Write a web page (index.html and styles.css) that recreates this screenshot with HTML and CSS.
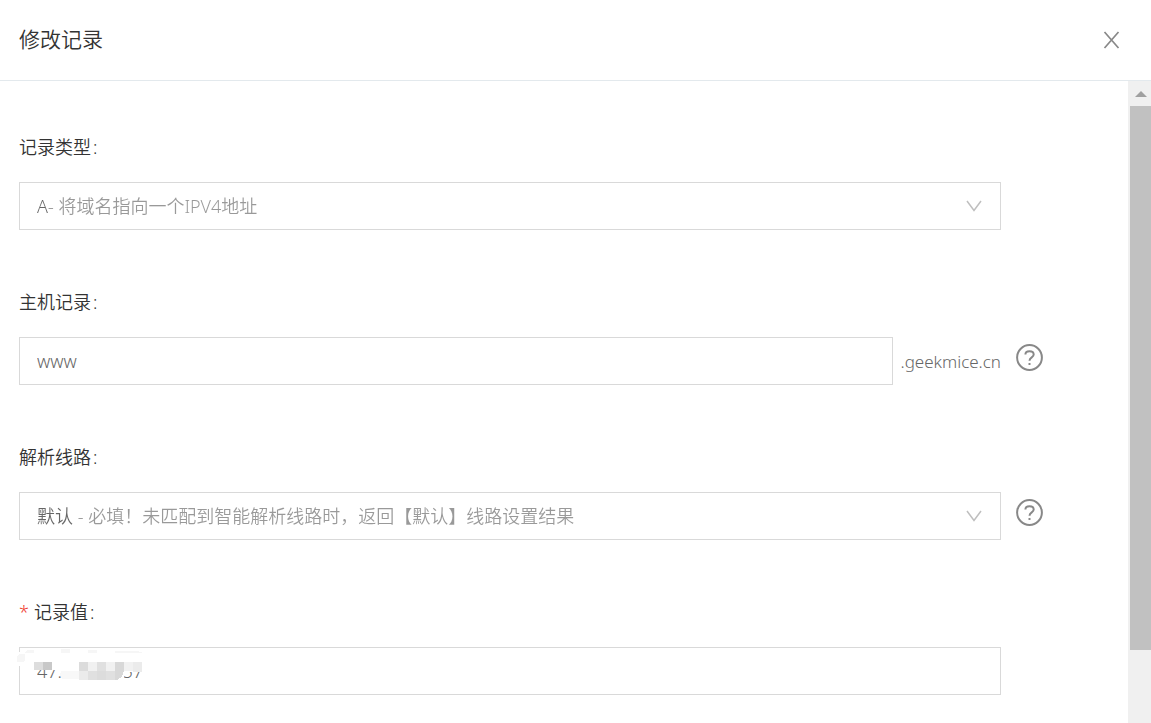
FILE: index.html
```html
<!DOCTYPE html>
<html lang="zh-CN">
<head>
    <meta charset="UTF-8">
    <meta name="viewport" content="width=device-width, initial-scale=1.0">
    <title>修改记录</title>
    <link rel="stylesheet" href="styles.css">
</head>
<body>
    <div class="drawer">
        <header class="drawer-header">
            <h1>修改记录</h1>
            <button type="button" class="close" aria-label="关闭">
                <svg width="17" height="20" viewBox="0 0 17 20"><path d="M1.500 3L15.500 19M15.500 3L1.500 19"/></svg>
            </button>
        </header>

        <div class="drawer-body">
            <form class="form">
                <div class="field">
                    <label for="type">记录类型<span class="colon">:</span></label>
                    <div class="row">
                        <div class="select-box">
                            <select id="type" class="control type-select">
                                <option>A- 将域名指向一个IPV4地址</option>
                            </select>
                            <svg class="arrow" width="16" height="12" viewBox="0 0 16 12"><path d="M1 1L8 10.500L15 1"/></svg>
                        </div>
                    </div>
                </div>

                <div class="field">
                    <label for="host">主机记录<span class="colon">:</span></label>
                    <div class="row">
                        <div class="host-box">
                            <input type="text" id="host" class="control" value="www">
                            <span class="suffix">.geekmice.cn</span>
                        </div>
                        <button type="button" class="help" aria-label="帮助">
                            <svg width="27" height="27" viewBox="0 0 27 27"><circle cx="13.5" cy="13.5" r="12.4"/><path class="mark" d="M9.400 10.600C9.400 8.400 11.100 7.200 13.500 7.200S17.700 8.500 17.700 10.600C17.700 13.400 13.500 13.400 13.500 16.700"/><path class="dot" d="M12.500 19h2v2h-2z"/></svg>
                        </button>
                    </div>
                </div>

                <div class="field">
                    <label for="line">解析线路<span class="colon">:</span></label>
                    <div class="row">
                        <div class="select-box">
                            <select id="line" class="control line-select">
                                <option>默认 - 必填！未匹配到智能解析线路时，返回【默认】线路设置结果</option>
                            </select>
                            <svg class="arrow" width="16" height="12" viewBox="0 0 16 12"><path d="M1 1L8 10.500L15 1"/></svg>
                        </div>
                        <button type="button" class="help" aria-label="帮助">
                            <svg width="27" height="27" viewBox="0 0 27 27"><circle cx="13.5" cy="13.5" r="12.4"/><path class="mark" d="M9.400 10.600C9.400 8.400 11.100 7.200 13.500 7.200S17.700 8.500 17.700 10.600C17.700 13.400 13.500 13.400 13.500 16.700"/><path class="dot" d="M12.500 19h2v2h-2z"/></svg>
                        </button>
                    </div>
                </div>

                <div class="field">
                    <label for="value"><span class="required">*</span>记录值<span class="colon">:</span></label>
                    <div class="row">
                        <div class="value-box">
                            <input type="text" id="value" class="control" value="47.            .57">
                            <!-- mosaic over the private part of the address -->
                            <svg class="mosaic" width="132" height="34" viewBox="0 0 132 34" shape-rendering="crispEdges" aria-hidden="true">
                                <path fill="#fff" d="M0 5h132v20H107v8H45V23H17v-4H0z"/>
                                <path fill="#f6f6f6" d="M0 9l3-2h5v6l-2 2H0zM8 5l3-2h6v3H8zM44 2h9v4h-9zM71 3h9v3h-9zM98 4h20l7 1v1H98z"/>
                                <path fill="#ddd" d="M17 15h9v8h-9z"/>
                                <path fill="#c8c8c8" d="M26 15h9v8h-9z"/>
                                <path fill="#dcdcdc" d="M62 15h9v9h-9zM80 24h9v9h-9z"/>
                                <path fill="#f1f1f1" d="M71 15h9v9h-9zM89 15h9v9h-9zM107 15h9v9h-9z"/>
                                <path fill="#e0e0e0" d="M80 15h9v9h-9zM71 24h9v9h-9zM89 24h9v9h-9z"/>
                                <path fill="#d8d8d8" d="M98 15h9v9h-9zM98 24h9l-2 6-5 3h-2z"/>
                                <path fill="#ebebeb" d="M116 15h9v10h-9zM62 24h9v9h-9z"/>
                                <path fill="#f8f8f8" d="M44 24h18v8H45l-2-4z"/>
                            </svg>
                        </div>
                    </div>
                </div>
            </form>

            <div class="scrollbar" aria-hidden="true">
                <div class="scroll-up"></div>
                <div class="scroll-thumb"></div>
                <div class="scroll-rest"></div>
            </div>
        </div>
    </div>
</body>
</html>
```
FILE: styles.css
```css
* {
    box-sizing: border-box;
}

body {
    margin: 0;
    font-family: 'Noto Sans', 'Noto Sans CJK SC', sans-serif;
    font-size: 18px;
    font-weight: 350;
    color: #333;
    background: #fff;
}

.drawer {
    display: flex;
    flex-direction: column;
    height: 100vh;
    overflow: hidden;
}

.drawer-header {
    display: flex;
    flex: none;
    justify-content: space-between;
    align-items: center;
    padding: 23px 31px 25px 19px;
    border-bottom: 1px solid #e3e9ed;
}

h1 {
    margin: 0;
    font-size: 21px;
    line-height: 32px;
    font-weight: 350;
}

button {
    display: flex;
    padding: 0;
    border: none;
    background: none;
    cursor: pointer;
}

.close {
    stroke: #888;
    stroke-width: 1.7;
}

.drawer-body {
    display: flex;
    flex: 1;
    min-height: 0;
}

.form {
    flex: 1;
    padding: 52px 85px 0 19px;
}

.field {
    margin-bottom: 58px;
}

label {
    display: block;
    line-height: 28px;
    margin-bottom: 21px;
}

.colon {
    margin-left: 2px;
}

.required {
    margin-right: 5px;
    color: #f04134;
}

.row {
    display: grid;
    grid-template-columns: 1fr 27px;
    gap: 15px;
}

.control {
    display: block;
    width: 100%;
    height: 48px;
    padding: 0 17px;
    border: 1px solid #d9d9d9;
    border-radius: 0;
    background: #fff;
    color: #666;
    font: inherit;
    appearance: none;
}

.select-box,
.value-box {
    position: relative;
}

/* the value is darker than the hint that follows it */
.select-box .control {
    color: transparent;
    background-clip: text;
}

.select-box .type-select {
    background-image: linear-gradient(to right, #666 29px, #999 29px);
}

.select-box .line-select {
    background-image: linear-gradient(to right, #666 55px, #999 55px);
}

.arrow {
    position: absolute;
    top: 18px;
    right: 19px;
    fill: none;
    stroke: #bfbfbf;
    stroke-width: 1.5;
    pointer-events: none;
}

.host-box {
    display: flex;
    align-items: center;
    gap: 7px;
}

.host-box .control {
    flex: 1;
    min-width: 0;
}

.suffix {
    color: #666;
    font-size: 17px;
}

.help {
    align-self: start;
    padding-top: 7px;
    stroke: #888;
    stroke-width: 2;
}

.help svg {
    fill: none;
}

.help .dot {
    fill: #888;
    stroke: none;
}

.mosaic {
    position: absolute;
    top: 0;
    left: -2px;
    pointer-events: none;
}

.scrollbar {
    display: flex;
    flex-direction: column;
    width: 23px;
    padding-left: 2px;
    background: #f0f0f0;
}

.scroll-up {
    display: flex;
    flex: none;
    justify-content: center;
    align-items: center;
    height: 25px;
}

.scroll-up::before {
    content: "";
    border: 6px solid transparent;
    border-top: none;
    border-bottom-color: #a0a0a0;
}

.scroll-thumb {
    flex: 544;
    background: #c1c1c1;
}

.scroll-rest {
    flex: 73;
}
```
